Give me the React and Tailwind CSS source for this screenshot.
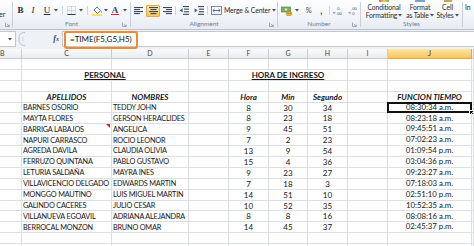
import React from 'react'

const COLS = 'grid grid-cols-[22px_90px_77px_40px_40px_39px_40px_40px_84px_2px]'

const ROWS = [
  ['BARNES OSORIO', 'TEDDY JOHN', 8, 30, 34, '08:30:34 a.m.'],
  ['MAYTA FLORES', 'GERSON HERACLIDES', 8, 23, 18, '08:23:18 a.m.'],
  ['BARRIGA LABAJOS', 'ANGELICA', 9, 45, 51, '09:45:51 a.m.'],
  ['NAPURI CARRASCO', 'ROCIO LEONOR', 7, 2, 23, '07:02:23 a.m.'],
  ['AGREDA DAVILA', 'CLAUDIA OLIVIA', 13, 9, 54, '01:09:54 p.m.'],
  ['FERRUZO QUINTANA', 'PABLO GUSTAVO', 15, 4, 36, '03:04:36 p.m.'],
  ['LETURIA SALDAÑA', 'MAYRA INES', 9, 23, 27, '09:23:27 a.m.'],
  ['VILLAVICENCIO DELGADO', 'EDWARDS MARTIN', 7, 18, 3, '07:18:03 a.m.'],
  ['MONGGO MAUTINO', 'LUIS MIGUEL MARTIN', 14, 51, 10, '02:51:10 p.m.'],
  ['GALINDO CACERES', 'JULIO CESAR', 10, 52, 35, '10:52:35 a.m.'],
  ['VILLANUEVA EGOAVIL', 'ADRIANA ALEJANDRA', 8, 8, 16, '08:08:16 a.m.'],
  ['BERROCAL MONZON', 'BRUNO OMAR', 14, 45, 37, '02:45:37 p.m.'],
]

const LETTERS = ['B', 'C', 'D', 'E', 'F', 'G', 'H', 'I', 'J', '']

function Caret() {
  return (
    <svg width="4" height="3" viewBox="0 0 4 3">
      <path d="M0 0h4L2 2.4Z" fill="#4a4a4a" />
    </svg>
  )
}

function Launcher() {
  return (
    <svg width="5" height="5" viewBox="0 0 5 5" fill="none">
      <path d="M0.5 0.5v4h4" stroke="#8a96a6" strokeWidth="0.8" />
      <path d="M1.8 1.8l2.4 2.4M4.2 2.6v1.6H2.6" stroke="#8a96a6" strokeWidth="0.7" />
    </svg>
  )
}

function IconAlign({ kind }) {
  const lines = kind === 'left'
    ? [[0, 9], [0, 6], [0, 9], [0, 6]]
    : kind === 'center'
      ? [[0, 9], [1.5, 6], [0, 9], [1.5, 6]]
      : [[0, 9], [3, 6], [0, 9], [3, 6]]
  return (
    <svg width="9" height="8" viewBox="0 0 9 8">
      {lines.map(([x, w], i) => (
        <rect key={i} x={x} y={i * 2} width={w} height="1.1" fill="#3c4a5c" />
      ))}
    </svg>
  )
}

function IconIndent({ dir }) {
  return (
    <svg width="10" height="9" viewBox="0 0 10 9">
      <rect x="4" y="0" width="6" height="1.1" fill="#3c4a5c" />
      <rect x="5" y="2.6" width="5" height="1.1" fill="#3c4a5c" />
      <rect x="5" y="5.2" width="5" height="1.1" fill="#3c4a5c" />
      <rect x="4" y="7.8" width="6" height="1.1" fill="#3c4a5c" />
      {dir === 'left'
        ? <path d="M3.6 2.2L0.6 4.4l3 2.2Z" fill="#2a62b0" />
        : <path d="M0.6 2.2l3 2.2-3 2.2Z" fill="#2a62b0" />}
    </svg>
  )
}

function IconMerge() {
  return (
    <svg width="11" height="9" viewBox="0 0 11 9" fill="none">
      <rect x="0.5" y="0.5" width="10" height="8" stroke="#5a6b80" strokeWidth="0.8" fill="#fff" />
      <path d="M2 4.5h7" stroke="#2a62b0" strokeWidth="0.9" />
      <path d="M3.4 3L1.8 4.5 3.4 6M7.6 3l1.6 1.5L7.6 6" stroke="#2a62b0" strokeWidth="0.9" />
    </svg>
  )
}

function IconBorders() {
  return (
    <svg width="9" height="9" viewBox="0 0 9 9" fill="none">
      <rect x="0.5" y="0.5" width="8" height="8" stroke="#9aa4b1" strokeWidth="0.7" strokeDasharray="1 1" />
      <path d="M4.5 0.5v8M0.5 4.5h8" stroke="#9aa4b1" strokeWidth="0.7" strokeDasharray="1 1" />
      <path d="M0.5 8.5h8" stroke="#2c3440" strokeWidth="1" />
    </svg>
  )
}

function IconBucket() {
  return (
    <svg width="11" height="10" viewBox="0 0 11 10" fill="none">
      <path d="M2 4l3-3 3.5 3.5-3 3Z" fill="#fff" stroke="#4a5566" strokeWidth="0.8" />
      <path d="M8.8 4.6c0.8 1 1.2 1.6 0.6 2" stroke="#4a5566" strokeWidth="0.7" />
      <rect x="0" y="8.3" width="10" height="1.7" fill="#f5e14b" />
    </svg>
  )
}

function IconCurrency() {
  return (
    <svg width="12" height="10" viewBox="0 0 12 10">
      <rect x="0.5" y="1" width="9" height="5" fill="#7fae62" stroke="#4c7a38" strokeWidth="0.6" />
      <circle cx="5" cy="3.5" r="1.2" fill="#d9ecc9" />
      <ellipse cx="8" cy="7" rx="2.8" ry="1.2" fill="#e9b838" stroke="#a77b16" strokeWidth="0.5" />
      <ellipse cx="8" cy="8.6" rx="2.8" ry="1.2" fill="#e9b838" stroke="#a77b16" strokeWidth="0.5" />
    </svg>
  )
}

function IconDecimal({ more }) {
  return (
    <svg width="12" height="10" viewBox="0 0 12 10">
      <text x="3" y="4" fontSize="4.2" fontFamily="Liberation Sans, sans-serif" fill="#3c4a5c">{more ? '.0' : '.00'}</text>
      <text x="3" y="9" fontSize="4.2" fontFamily="Liberation Sans, sans-serif" fill="#3c4a5c">{more ? '.00' : '.0'}</text>
      <path d={more ? 'M2.6 6.8H0.4M1.2 6l-0.8 0.8 0.8 0.8' : 'M0.3 6.8h2.2M1.7 6l0.8 0.8-0.8 0.8'} stroke="#2a62b0" strokeWidth="0.6" fill="none" />
    </svg>
  )
}

function Divider() {
  return <div className="w-px self-stretch my-[2px] bg-[#c9d0da]" />
}

function GroupLabel({ children, launcher = true }) {
  return (
    <div className="h-[9px] flex items-center justify-center relative text-[6.5px] leading-none text-[#6f7d90]">
      <span>{children}</span>
      {launcher && (
        <span className="absolute right-[3px] top-[2px]"><Launcher /></span>
      )}
    </div>
  )
}

function Ribbon() {
  return (
    <div className="h-[30px] flex bg-gradient-to-b from-[#ffffff] to-[#e7ecf3] border-b border-[#b9c2ce] text-[#2b2b2b]">

      {/* Clipboard (cut off) */}
      <div className="w-[12px] flex flex-col">
        <div className="flex-1 flex items-end pb-[2px] text-[7px] leading-none -ml-[1px]">er</div>
        <div className="h-[9px] flex items-center pl-[5px]"><Launcher /></div>
      </div>
      <Divider />

      {/* Font */}
      <div className="w-[117px] flex flex-col">
        <div className="flex-1 flex items-center pl-[2px] pt-[1px]">
          <span className="w-[11px] text-center font-['Liberation_Serif'] font-bold text-[9px] leading-none">B</span>
          <span className="w-[10px] ml-[2px] text-center font-['Liberation_Serif'] italic text-[9px] leading-none">I</span>
          <span className="w-[10px] ml-[4px] text-center font-['Liberation_Serif'] underline text-[9px] leading-none">U</span>
          <span className="ml-[2px] flex"><Caret /></span>
          <span className="w-px h-[9px] ml-[4px] bg-[#cfd6df]" />
          <span className="ml-[4px] flex"><IconBorders /></span>
          <span className="ml-[3px] flex"><Caret /></span>
          <span className="w-px h-[9px] ml-[4px] bg-[#cfd6df]" />
          <span className="ml-[4px] flex"><IconBucket /></span>
          <span className="ml-[1px] flex"><Caret /></span>
          <span className="ml-[3px] flex flex-col items-center">
            <span className="font-['Liberation_Serif'] text-[9px] leading-[8px] text-[#1d3f7a] font-bold">A</span>
            <span className="w-[8px] h-[1.5px] bg-[#e0242a]" />
          </span>
          <span className="ml-[4px] flex"><Caret /></span>
        </div>
        <GroupLabel>Font</GroupLabel>
      </div>
      <Divider />

      {/* Alignment */}
      <div className="w-[146px] flex flex-col">
        <div className="flex-1 flex items-center pl-[2px] pt-[1px]">
          <span className="w-[10px] flex justify-center"><IconAlign kind="left" /></span>
          <span className="w-[14px] h-[12px] ml-[3px] flex items-center justify-center rounded-[1px] border border-[#e3a94a] bg-gradient-to-b from-[#fde7a8] to-[#f8c65d]">
            <IconAlign kind="center" />
          </span>
          <span className="w-[10px] ml-[2px] flex justify-center"><IconAlign kind="right" /></span>
          <span className="w-px h-[9px] ml-[3px] bg-[#cfd6df]" />
          <span className="w-[10px] ml-[3px] flex justify-center"><IconIndent dir="left" /></span>
          <span className="w-[10px] ml-[5px] flex justify-center"><IconIndent dir="right" /></span>
          <span className="w-px h-[9px] ml-[3px] bg-[#cfd6df]" />
          <span className="ml-[3px] flex"><IconMerge /></span>
          <span className="ml-[2px] text-[6.8px] leading-none whitespace-nowrap tracking-[-0.1px]">Merge &amp; Center</span>
          <span className="ml-[2px] flex"><Caret /></span>
        </div>
        <GroupLabel>Alignment</GroupLabel>
      </div>
      <Divider />

      {/* Number */}
      <div className="w-[82px] flex flex-col">
        <div className="flex-1 flex items-center pl-[3px] pt-[1px]">
          <span className="flex"><IconCurrency /></span>
          <span className="ml-[2px] flex"><Caret /></span>
          <span className="w-[10px] ml-[5px] text-center text-[7.5px] leading-none text-[#3c4a5c]">%</span>
          <span className="w-[10px] ml-[3px] text-center text-[9px] leading-none font-bold text-[#3c4a5c]">,</span>
          <span className="w-px h-[9px] ml-[3px] bg-[#cfd6df]" />
          <span className="ml-[3px] flex"><IconDecimal more /></span>
          <span className="ml-[3px] flex"><IconDecimal /></span>
        </div>
        <GroupLabel>Number</GroupLabel>
      </div>
      <Divider />

      {/* Styles */}
      <div className="w-[101px] flex flex-col">
        <div className="flex-1 flex items-start pl-[2px] text-[6.8px] leading-[8px] tracking-[-0.1px]">
          <div className="w-[42px] flex flex-col items-center">
            <span className="w-[10px] h-[2px] bg-gradient-to-r from-[#e0574f] via-[#f3d15b] to-[#6aa84f]" />
            <span className="mt-[1px]">Conditional</span>
            <span className="flex items-center gap-[1px]">Formatting <Caret /></span>
          </div>
          <div className="w-[30px] flex flex-col items-center">
            <span className="w-[10px] h-[2px] bg-[#7f9fcf]" />
            <span className="mt-[1px]">Format</span>
            <span className="flex items-center gap-[1px] whitespace-nowrap">as Table <Caret /></span>
          </div>
          <div className="w-[25px] flex flex-col items-center">
            <span className="w-[8px] h-[2px] bg-[#c8a35a]" />
            <span className="mt-[1px]">Cell</span>
            <span className="flex items-center gap-[1px]">Styles <Caret /></span>
          </div>
        </div>
        <GroupLabel launcher={false}>Styles</GroupLabel>
      </div>
      <Divider />

      {/* Cells (cut off) */}
      <div className="flex-1 pl-[2px] pt-[3px] text-[6.8px] leading-[8px] whitespace-nowrap overflow-hidden">In</div>
    </div>
  )
}

function FormulaBar() {
  return (
    <div className="h-[19px] flex bg-[#eef1f5] pt-[1px] pb-[2px]">
      {/* Name box (cut off) */}
      <div className="w-[16px] bg-white border border-l-0 border-[#c3c8cf] flex items-center justify-end pr-[3px]">
        <Caret />
      </div>
      <div className="w-[46px] flex items-center">
        <svg width="10" height="16" viewBox="0 0 10 16" fill="none" className="ml-[1px]">
          <path d="M8 1.5C3 1.5 2 4 2 8s1 6.5 6 6.5" stroke="#b9c1cc" strokeWidth="1" />
          <circle cx="6" cy="7" r="0.5" fill="#9aa4b1" />
          <circle cx="6" cy="9" r="0.5" fill="#9aa4b1" />
        </svg>
        <span className="ml-auto mr-[3px] font-['Liberation_Serif'] italic font-bold text-[8px] leading-none text-[#404a57]">
          f<span className="text-[6px]">x</span>
        </span>
      </div>
      <div className="flex-1 bg-white border border-r-0 border-[#c3c8cf] flex items-center pl-[7px] text-[8px] text-[#111] font-['Lato']">
        =TIME(F5,G5,H5)
      </div>
    </div>
  )
}

function ColumnHeaders() {
  return (
    <div className={`${COLS} h-[10px]`}>
      {LETTERS.map((l, i) => {
        const active = l === 'J'
        return (
          <div
            key={i}
            className={
              active
                ? 'flex items-center justify-center border-r border-b border-[#e0a73c] bg-gradient-to-b from-[#fde6a3] to-[#f6c65a] text-[7px] leading-none text-[#333]'
                : `flex items-center ${i === 0 ? 'justify-start' : 'justify-center'} border-r border-b border-[#c9cdd3] bg-gradient-to-b from-[#f9fafb] to-[#e9ecef] text-[7px] leading-none text-[#444]`
            }
          >
            {l}
          </div>
        )
      })}
    </div>
  )
}

function Cell({ children, className = '', span = '' }) {
  return (
    <div className={`relative flex items-center border-r border-b border-[#dcdfe4] whitespace-nowrap overflow-hidden ${span} ${className}`}>
      {children}
    </div>
  )
}

function EmptyRow() {
  return LETTERS.map((_, i) => <Cell key={i} />)
}

function Sheet() {
  const head = 'justify-center font-bold italic text-[8px]'
  const num = 'justify-center'
  const name = 'pl-[1px] text-[7.3px] tracking-[-0.2px]'
  return (
    <div className={`${COLS} auto-rows-[10.9px] text-[8px] leading-none text-[#161616] font-['Lato']`}>
      {/* row 1 */}
      <EmptyRow />

      {/* row 2: titles */}
      <Cell />
      <Cell span="col-span-2" className="justify-center font-bold underline">PERSONAL</Cell>
      <Cell />
      <Cell span="col-span-3" className="justify-center font-bold underline">HORA DE INGRESO</Cell>
      <Cell />
      <Cell />
      <Cell />

      {/* row 3 */}
      <EmptyRow />

      {/* row 4: headers */}
      <Cell />
      <Cell className={head}>APELLIDOS</Cell>
      <Cell className={head}>NOMBRES</Cell>
      <Cell />
      <Cell className={head}>Hora</Cell>
      <Cell className={head}>Min</Cell>
      <Cell className={head}>Segundo</Cell>
      <Cell />
      <Cell className={head}>FUNCION TIEMPO</Cell>
      <Cell />

      {/* data */}
      {ROWS.map(([ape, nom, h, m, s, t], r) => (
        <React.Fragment key={ape}>
          <Cell />
          <Cell className={name}>
            {ape}
            {r === 2 && (
              <span className="absolute top-0 right-[1px] w-0 h-0 border-l-[4px] border-l-transparent border-t-[4px] border-t-[#d8231f]" />
            )}
          </Cell>
          <Cell className={name}>{nom}</Cell>
          <Cell />
          <Cell className={num}>{h}</Cell>
          <Cell className={num}>{m}</Cell>
          <Cell className={num}>{s}</Cell>
          <Cell />
          <div className="relative flex items-center justify-center border-r border-b border-[#dcdfe4] whitespace-nowrap text-[7.8px]">
            {t}
            {r === 0 && (
              <>
                <span className="absolute -left-px -top-px -right-px -bottom-px border-2 border-[#111]" />
                <span className="absolute -right-[3px] -bottom-[3px] w-[5px] h-[5px] bg-[#111] border border-white" />
              </>
            )}
          </div>
          <Cell />
        </React.Fragment>
      ))}

      {/* trailing empty rows */}
      <EmptyRow />
      <EmptyRow />
    </div>
  )
}

export default function App() {
  return (
    <div className="relative w-[474px] h-[246px] overflow-hidden bg-white font-['Lato',sans-serif]">
      <Ribbon />
      <FormulaBar />
      <ColumnHeaders />
      <Sheet />

      {/* Annotation box round the formula */}
      <div className="absolute left-[64px] top-[31px] w-[74px] h-[18px] rounded-[3px] border-2 border-[#ef8a2e]" />
    </div>
  )
}
